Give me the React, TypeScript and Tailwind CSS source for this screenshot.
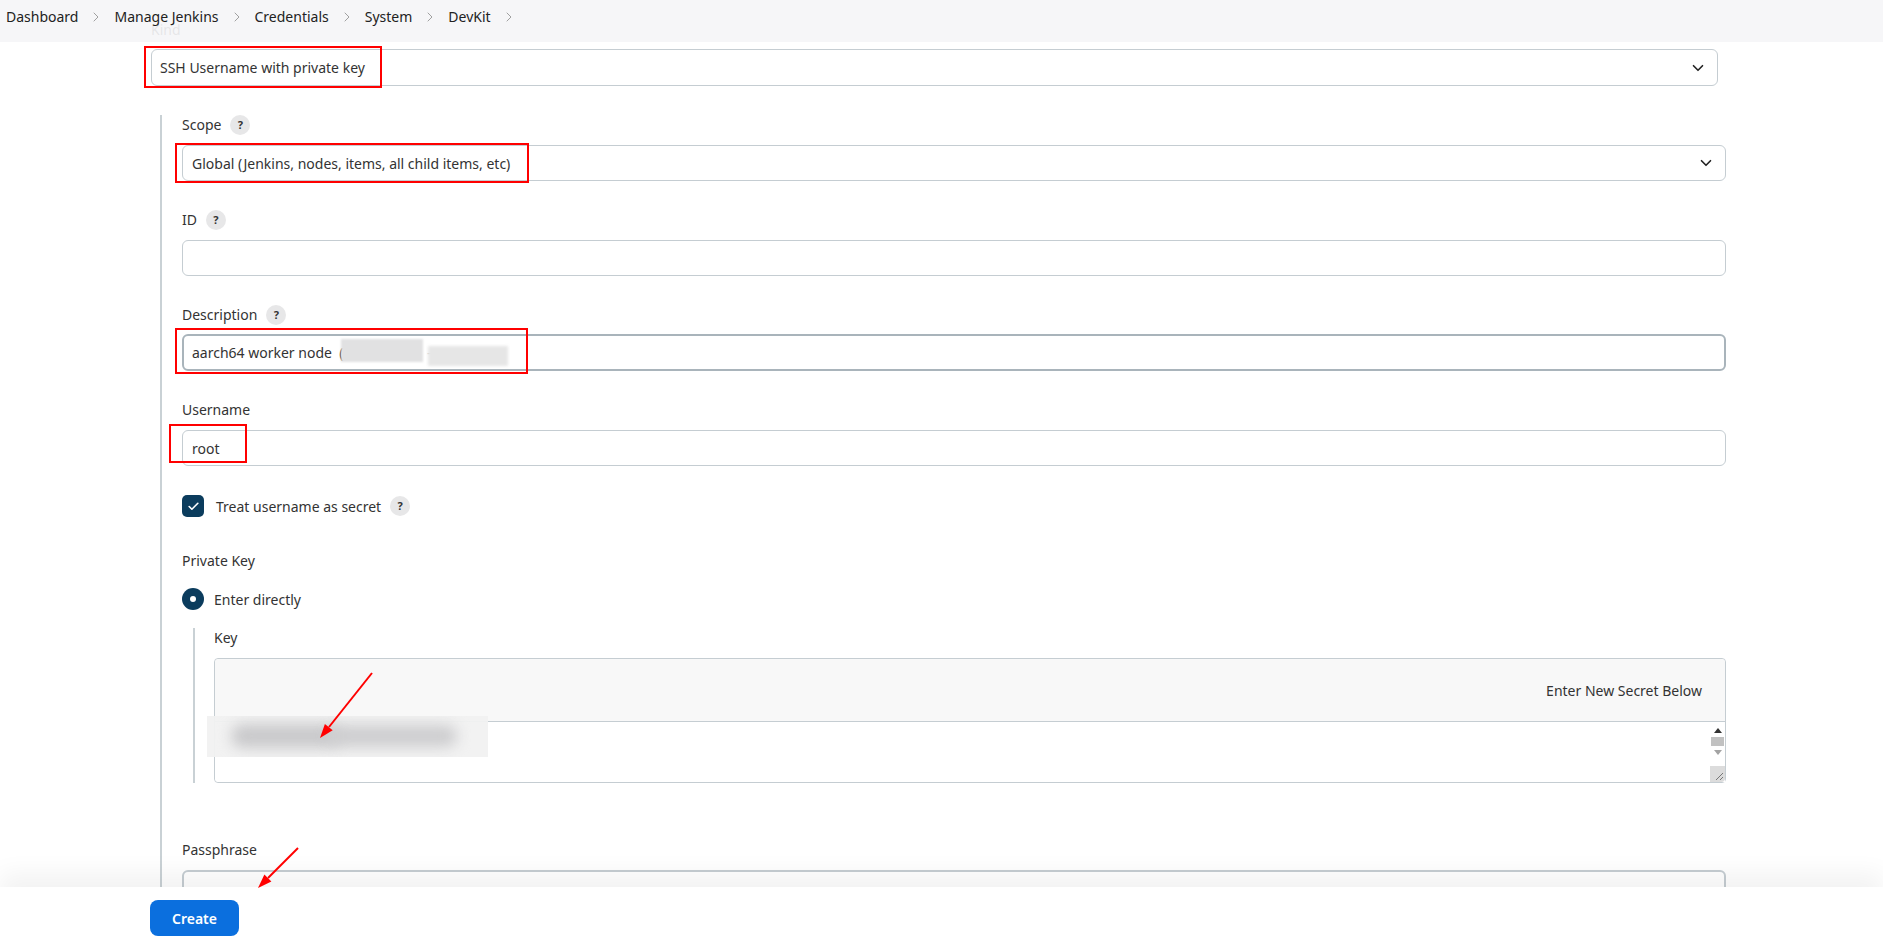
import { ChevronDown, ChevronRight, Check } from 'lucide-react';

const CRUMBS = ['Dashboard', 'Manage Jenkins', 'Credentials', 'System', 'DevKit'];

function Help() {
    return (
        <span className="ml-[9px] w-[20px] h-[20px] rounded-full bg-[#e7e7e8] flex items-center justify-center text-[11px] font-bold text-[#333]">
            ?
        </span>
    );
}

function Label({ text, help = false }: { text: string; help?: boolean }) {
    return (
        <div className="flex items-center h-[20px] leading-[20px] text-[14px] text-[#333]">
            {text}
            {help && <Help />}
        </div>
    );
}

function RedBox({ className }: { className: string }) {
    return <div className={`absolute border-2 border-[#ff0000] pointer-events-none ${className}`} />;
}

export default function App() {
    return (
        <div className="relative h-[941px] bg-white text-[#333] font-['Noto_Sans','Liberation_Sans',sans-serif] text-[14px] overflow-hidden">
            {/* ===== BREADCRUMB BAR ===== */}
            <header className="absolute top-0 left-0 right-0 h-[42px] z-20 bg-[#f5f5f7]/[0.9]">
                <nav className="flex items-center gap-[10px] pl-[6px] pt-[7px] h-[20px] box-content">
                    {CRUMBS.map((c) => (
                        <div key={c} className="flex items-center gap-[10px]">
                            <span className="leading-[20px] text-[14px] text-[#222]">{c}</span>
                            <ChevronRight className="w-[16px] h-[16px] text-[#a0a0a0]" strokeWidth={1.5} />
                        </div>
                    ))}
                </nav>
            </header>

            {/* ===== FORM ===== */}
            <main className="pl-[151px] pr-[165px] pt-[20px]">
                <div className="leading-[20px] text-[14px] text-[#555]">Kind</div>
                <div className="relative mt-[9px]">
                    <div className="h-[37px] border border-[#c5cdd2] rounded-[6px] pl-[8px] pr-[10px] flex items-center justify-between bg-white">
                        <span>SSH Username with private key</span>
                        <ChevronDown className="w-[18px] h-[18px] text-[#222]" strokeWidth={2.2} />
                    </div>
                    <RedBox className="-left-[7px] -top-[3px] w-[238px] h-[42px]" />
                </div>

                <section className="mt-[29px] ml-[9px] -mr-[8px] border-l-2 border-[#c9d1d5] pl-[20px] pb-[60px]">
                    {/* Scope */}
                    <Label text="Scope" help />
                    <div className="relative mt-[10px]">
                        <div className="h-[36px] border border-[#c5cdd2] rounded-[6px] pl-[9px] pr-[10px] flex items-center justify-between">
                            <span>Global (Jenkins, nodes, items, all child items, etc)</span>
                            <ChevronDown className="w-[18px] h-[18px] text-[#222]" strokeWidth={2.2} />
                        </div>
                        <RedBox className="-left-[7px] -top-[2px] w-[354px] h-[40px]" />
                    </div>

                    {/* ID */}
                    <div className="mt-[29px]">
                        <Label text="ID" help />
                    </div>
                    <div className="mt-[10px] h-[36px] border border-[#c5cdd2] rounded-[6px]" />

                    {/* Description */}
                    <div className="mt-[29px]">
                        <Label text="Description" help />
                    </div>
                    <div className="relative mt-[9px]">
                        <div className="h-[37px] border-2 border-[#a9b4bb] rounded-[6px] pl-[8px] flex items-center whitespace-pre">
                            <span>aarch64 worker node  (</span>
                            <span className="inline-block w-[82px] h-[23px] bg-[#e1e1e2] blur-[1px] -ml-[2px] -mt-[4px]" />
                            <span className="text-[#ccc]"> -</span>
                            <span className="inline-block w-[80px] h-[20px] bg-[#e6e6e6] blur-[1.5px] -ml-[4px] mt-[6px]" />
                        </div>
                        <RedBox className="-left-[7px] -top-[6px] w-[353px] h-[46px]" />
                    </div>

                    {/* Username */}
                    <div className="mt-[29px]">
                        <Label text="Username" />
                    </div>
                    <div className="relative mt-[10px]">
                        <div className="h-[36px] border border-[#c5cdd2] rounded-[6px] pl-[9px] flex items-center">
                            root
                        </div>
                        <RedBox className="-left-[13px] -top-[6px] w-[78px] h-[39px]" />
                    </div>

                    {/* Treat username as secret */}
                    <div className="mt-[29px] flex items-center h-[22px]">
                        <span className="w-[22px] h-[22px] rounded-[5px] bg-[#0b3c5d] flex items-center justify-center">
                            <Check className="w-[13px] h-[13px] text-white" strokeWidth={3} />
                        </span>
                        <span className="ml-[12px]">Treat username as secret</span>
                        <Help />
                    </div>

                    {/* Private Key */}
                    <div className="mt-[34px]">
                        <Label text="Private Key" />
                    </div>
                    <div className="mt-[17px] flex items-center h-[22px]">
                        <span className="w-[22px] h-[22px] rounded-full bg-[#0b3c5d] flex items-center justify-center">
                            <span className="w-[6px] h-[6px] rounded-full bg-white" />
                        </span>
                        <span className="ml-[10px]">Enter directly</span>
                    </div>

                    <div className="mt-[18px] ml-[11px] border-l-2 border-[#c9d1d5] pl-[19px]">
                        <Label text="Key" />
                        <div className="relative mt-[10px] border border-[#c5cdd2] rounded-[4px]">
                            <div className="h-[63px] bg-[#f8f8f8] border-b border-[#c5cdd2] rounded-t-[4px] flex items-center justify-end pr-[23px]">
                                Enter New Secret Below
                            </div>
                            <div className="h-[60px] bg-white flex justify-end rounded-b-[4px]">
                                <div className="w-[15px] flex flex-col items-center bg-white">
                                    <span className="mt-[6px] w-0 h-0 border-x-[4px] border-x-transparent border-b-[5px] border-b-[#333]" />
                                    <span className="mt-[4px] w-[13px] h-[9px] bg-[#c1c1c1]" />
                                    <span className="mt-[4px] w-0 h-0 border-x-[4px] border-x-transparent border-t-[5px] border-t-[#a3a3a3]" />
                                    <span className="mt-auto w-[15px] h-[16px] bg-[#dcdcdc] flex items-end justify-end rounded-br-[4px] overflow-hidden">
                                        <svg width="10" height="10" viewBox="0 0 10 10" className="mb-[1px] mr-[1px]">
                                            <path d="M9 2 L2 9 M9 6 L6 9" stroke="#777" strokeWidth="1" />
                                        </svg>
                                    </span>
                                </div>
                            </div>
                            {/* blurred secret */}
                            <div className="absolute -left-[8px] top-[57px] w-[281px] h-[41px] bg-[#f1f1f1]/95 overflow-hidden">
                                <div className="absolute left-[24px] top-[8px] w-[110px] h-[24px] rounded-full bg-[#c9c9cb] blur-[7px]" />
                                <div className="absolute left-[120px] top-[9px] w-[130px] h-[22px] rounded-full bg-[#cdcdcf] blur-[7px]" />
                            </div>
                        </div>
                    </div>

                    {/* Passphrase */}
                    <div className="mt-[57px]">
                        <Label text="Passphrase" />
                    </div>
                    <div className="mt-[10px] h-[36px] border-2 border-[#c5cdd2] rounded-[6px]" />
                </section>
            </main>

            {/* ===== BOTTOM BAR ===== */}
            <footer className="absolute bottom-0 left-0 right-0 h-[54px] z-20 bg-white shadow-[0_-14px_24px_rgba(0,0,0,0.05)] pl-[150px] pt-[13px]">
                <button className="w-[89px] h-[36px] rounded-[8px] bg-[#0b6fde] text-white text-[14px] font-semibold">
                    Create
                </button>
            </footer>

            {/* ===== ANNOTATION ARROWS ===== */}
            <svg className="absolute left-0 top-0 z-30 pointer-events-none" width="1883" height="941">
                <line x1="372" y1="673" x2="329" y2="727" stroke="#ff0000" strokeWidth="2" />
                <polygon points="320,738 332.7,730.2 324.9,723.9" fill="#ff0000" />
                <line x1="298" y1="848" x2="268" y2="878" stroke="#ff0000" strokeWidth="2" />
                <polygon points="258,888 271.4,881.6 264.4,874.6" fill="#ff0000" />
            </svg>
        </div>
    );
}
